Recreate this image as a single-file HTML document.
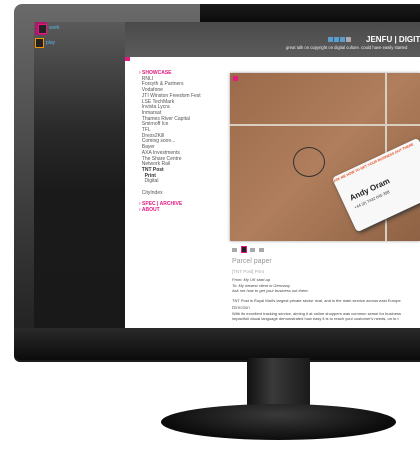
<!DOCTYPE html><html><head><style>
body{margin:0;width:420px;height:455px;background:#fff;position:relative;overflow:hidden;font-family:"Liberation Sans",sans-serif}
div{position:absolute;box-sizing:border-box}
.nav{font-size:5px;line-height:5.7px;color:#555}
.p{color:#e5197f;font-weight:bold}
</style></head><body>
<div style="left:14px;top:4px;width:420px;height:358px;background:linear-gradient(#6a6a6a,#3a3a3a 60%,#1c1c1c);border-radius:8px 0 0 6px"></div>
<div style="left:200px;top:4px;width:220px;height:20px;background:linear-gradient(#1a1a1a,#0a0a0a)"></div>
<div style="left:14px;top:328px;width:406px;height:32px;background:linear-gradient(#2a2a2a,#0c0c0c);border-radius:0 0 0 6px"></div>
<div style="left:34px;top:22px;width:400px;height:306px;background:linear-gradient(#5a5a5a,#2a2a2a 35%,#1a1a1a 55%,#191919)"></div>
<div style="left:125px;top:22px;width:300px;height:36px;background:linear-gradient(#4a4a4a,#5c5c5c)"></div>
<div style="left:35px;top:22px;width:12px;height:13px;background:#b0166a"></div>
<div style="left:38px;top:24px;width:9px;height:10px;border:1.5px solid #e5197f;background:#222"></div>
<div style="left:49px;top:25px;font-size:5px;color:#5ab4e0">work</div>
<div style="left:35px;top:38px;width:9px;height:10px;border:1.5px solid #f29400;background:#222"></div>
<div style="left:46px;top:40px;font-size:5px;color:#5ab4e0">play</div>
<div style="left:328px;top:37px;width:5px;height:5px;background:#5a9ed0;box-shadow:6px 0 #5a9ed0,12px 0 #5a9ed0,18px 0 #aaa"></div>
<div style="left:366px;top:35px;font-size:8px;font-weight:bold;color:#fff;white-space:nowrap">JENFU | DIGITAL</div>
<div style="left:286px;top:45px;font-size:4.2px;color:#eee;white-space:nowrap">great talk on copyright on digital culture. could have easily started</div>
<div style="left:125px;top:57px;width:300px;height:271px;background:#fff"></div>
<div style="left:125px;top:57px;width:5px;height:4px;background:#e5197f"></div>
<div class="nav" style="left:139px;top:71px"><span class="p">› SHOWCASE</span><br>&nbsp;&nbsp;RNLI<br>&nbsp;&nbsp;Forsyth &amp; Partners<br>&nbsp;&nbsp;Vodafone<br>&nbsp;&nbsp;JTI Winston Freedom Fest<br>&nbsp;&nbsp;LSE TechMark<br>&nbsp;&nbsp;Invista Lycra<br>&nbsp;&nbsp;Inmarsat<br>&nbsp;&nbsp;Thames River Capital<br>&nbsp;&nbsp;Smirnoff Ice<br>&nbsp;&nbsp;TFL<br>&nbsp;&nbsp;Dress2Kill<br>&nbsp;&nbsp;Coming soon...<br>&nbsp;&nbsp;Bayer<br>&nbsp;&nbsp;AXA Investments<br>&nbsp;&nbsp;The Share Centre<br>&nbsp;&nbsp;Network Rail<br>&nbsp;&nbsp;<b style="color:#333">TNT Post</b><br>&nbsp;&nbsp;&nbsp;&nbsp;<b style="color:#333">Print</b><br>&nbsp;&nbsp;&nbsp;&nbsp;Digital<br><br>&nbsp;&nbsp;CityIndex<br><br><span class="p">› SPEC | ARCHIVE<br>› ABOUT</span></div>
<div style="left:230px;top:73px;width:190px;height:168px;background:linear-gradient(135deg,#9a6a4a,#b07e5c 50%,#8e6244);box-shadow:0 0 3px #999"></div>
<div style="left:230px;top:124px;width:190px;height:2px;background:#d8cfc0"></div>
<div style="left:385px;top:73px;width:2px;height:168px;background:#d8cfc0"></div>
<div style="left:293px;top:147px;width:32px;height:30px;border:1px solid #333;border-radius:50%"></div>
<div style="left:340px;top:155px;width:95px;height:60px;background:#f8f8f8;transform:rotate(-25deg);border-radius:4px;box-shadow:1px 2px 4px #333"><div style="left:8px;top:22px;font-size:8px;font-weight:bold;color:#222">Andy Oram</div><div style="left:0;top:2px;font-size:3.5px;color:#e5501f;font-weight:bold">ASK ME HOW TO GET YOUR BUSINESS OUT THERE</div><div style="left:8px;top:34px;font-size:4px;color:#333">+44 (0) 7432 645 398</div></div>
<div style="left:233px;top:76px;width:5px;height:5px;background:#e5197f"></div>
<div style="left:232px;top:248px;width:5px;height:4px;background:#aaa;box-shadow:18px 0 #aaa,27px 0 #aaa"></div>
<div style="left:241px;top:246px;width:6px;height:7px;border:1px solid #e5197f;background:#222"></div>
<div style="left:232px;top:258px;font-size:7px;color:#999">Parcel paper</div>
<div style="left:232px;top:269px;font-size:4.5px;color:#aaa">[TNT Post] Print</div>
<div style="left:232px;top:277px;font-size:4px;line-height:5.5px;color:#444;font-style:italic">From: My UK start-up<br>To: My newest client in Germany<br>Ask me how to get your business out there.</div>
<div style="left:232px;top:298px;font-size:4px;color:#444;white-space:nowrap">TNT Post is Royal Mail's largest private sector rival, and is the main service across east Europe</div>
<div style="left:232px;top:305px;font-size:4.5px;color:#666">Direction</div>
<div style="left:232px;top:311px;font-size:4px;line-height:5px;color:#444;white-space:nowrap">With its excellent tracking service, aiming it at online shoppers was common sense for business<br>impactfull visual language demonstrated how easy it is to reach your customer's needs, on to t</div>
<div style="left:247px;top:358px;width:63px;height:55px;background:linear-gradient(90deg,#111,#3a3a3a 40%,#1a1a1a)"></div>
<div style="left:161px;top:404px;width:235px;height:36px;border-radius:50%;background:radial-gradient(ellipse at 50% 30%,#3a3a3a,#0c0c0c 70%)"></div>
</body></html>
